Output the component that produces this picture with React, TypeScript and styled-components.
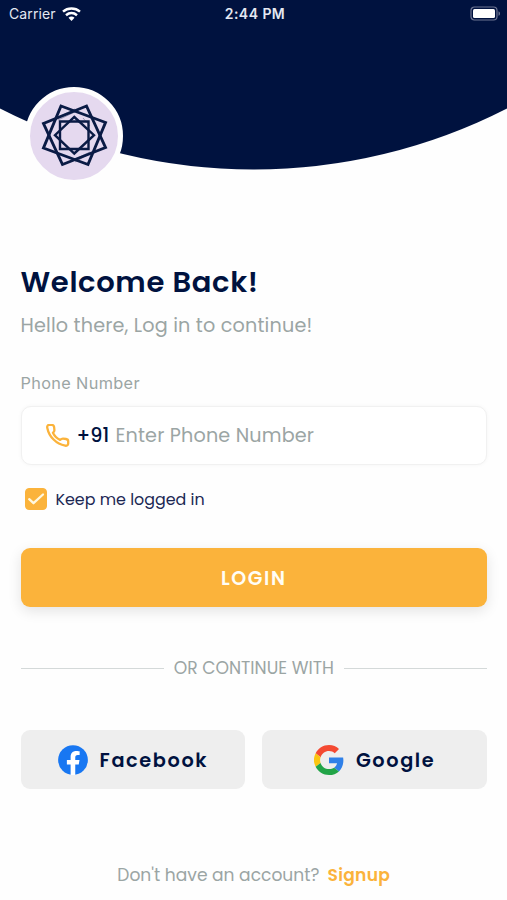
import React, { useState } from "react";
import styled, { createGlobalStyle } from "styled-components";

const navy = "#00123f";
const amber = "#fbb33b";
const gray = "#9ba5a4";

const GlobalStyle = createGlobalStyle`
  * { box-sizing: border-box; }
  body { margin: 0; background: #fefefe; }
  button, input { font: inherit; }
`;

const Screen = styled.main`
  width: 507px;
  height: 900px;
  overflow: hidden;
  display: flex;
  flex-direction: column;
  background: #fefefe;
  color: ${navy};
  font-family: Poppins, Inter, sans-serif;
  white-space: nowrap;
`;

const Header = styled.header`
  position: relative;
  flex: none;
  height: 180px;
`;

const Curve = styled.svg`
  position: absolute;
  inset: 0;
`;

const StatusBar = styled.div`
  position: relative;
  display: grid;
  grid-template-columns: 1fr auto 1fr;
  align-items: center;
  height: 28px;
  padding: 0 6px 0 9px;
  color: #e4e8f2;
  font: 400 14px/28px Inter, sans-serif;
`;

const Carrier = styled.div`
  display: flex;
  align-items: center;
  gap: 6px;
  letter-spacing: 0.1px;
`;

const Clock = styled.div`
  font-weight: 600;
  letter-spacing: 0.45px;
`;

const BatteryIcon = styled.svg`
  justify-self: end;
  margin-bottom: 2px;
`;

const Logo = styled.div`
  position: absolute;
  left: 25px;
  top: 87px;
  width: 98px;
  height: 98px;
  border: 5px solid #fefefe;
  border-radius: 50%;
  background: #e5d9ef;
`;

const Content = styled.section`
  flex: 1;
  display: flex;
  flex-direction: column;
  padding: 82px 20px 0 20.5px;
`;

const Title = styled.h1`
  margin: 0;
  font-size: 29px;
  font-weight: 600;
  line-height: 40px;
  letter-spacing: 0.65px;
`;

const Subtitle = styled.p`
  margin: 9px 0 0;
  color: ${gray};
  font-size: 19.2px;
  line-height: 30px;
  letter-spacing: 0.17px;
`;

const Label = styled.label`
  margin-top: 30px;
  color: ${gray};
  font-family: Inter, sans-serif;
  font-size: 16.3px;
  line-height: 25px;
  letter-spacing: 0.35px;
`;

const Field = styled.div`
  display: flex;
  align-items: center;
  height: 59px;
  margin-top: 10px;
  padding-left: 24px;
  border: 1px solid #f1f1f1;
  border-radius: 10px;
  background: #fff;
  box-shadow: 0 0 4px rgba(0, 0, 0, 0.04);
  font-size: 19.2px;
`;

const Prefix = styled.span`
  width: 39px;
  margin-left: 7px;
  font-weight: 500;
`;

const PhoneInput = styled.input`
  width: 300px;
  padding: 0;
  border: 0;
  outline: 0;
  background: none;
  color: ${navy};
  letter-spacing: 0.16px;

  &::placeholder { color: ${gray}; opacity: 1; }
`;

const Remember = styled.button`
  display: flex;
  align-items: center;
  align-self: flex-start;
  gap: 9px;
  height: 24px;
  margin-top: 22px;
  padding: 0 0 0 4px;
  border: 0;
  background: none;
  color: #1c2854;
  font-size: 15.9px;
`;

const CheckBox = styled.span<{ $checked: boolean }>`
  display: flex;
  width: 22px;
  height: 22px;
  border: 1px solid ${amber};
  border-radius: 4px;
  background: ${({ $checked }) => ($checked ? amber : "#fff")};
`;

const LoginButton = styled.button`
  flex: none;
  height: 59px;
  margin-top: 37px;
  padding: 2px 0 0;
  border: 0;
  border-radius: 9px;
  background: ${amber};
  box-shadow: 0 4px 14px rgba(0, 0, 0, 0.11);
  color: #fffdf5;
  font-size: 19px;
  font-weight: 600;
  letter-spacing: 1.6px;
`;

const Divider = styled.div`
  display: flex;
  align-items: center;
  gap: 10px;
  height: 24px;
  margin-top: 49px;
  color: ${gray};
  font-size: 17.2px;

  &::before, &::after {
    content: "";
    flex: 1;
    height: 1px;
    background: #d4d9d9;
  }
`;

const DividerText = styled.span`
  display: flex;
  justify-content: center;
  width: 160px;
`;

const Socials = styled.div`
  display: grid;
  grid-template-columns: 1fr 1fr;
  gap: 17px;
  margin-top: 50px;
`;

const SocialButton = styled.button`
  display: flex;
  align-items: center;
  justify-content: center;
  gap: 12px;
  height: 59px;
  padding: 0;
  border: 0;
  border-radius: 9px;
  background: #eee;
  color: ${navy};
  font-size: 19.3px;
  font-weight: 600;
  letter-spacing: 1.6px;
`;

const SocialName = styled.span`
  padding-top: 2px;
`;

const Footer = styled.footer`
  display: flex;
  justify-content: center;
  gap: 8px;
  margin-top: 74px;
  color: ${gray};
  font-size: 17.1px;
  line-height: 25px;
`;

const SignupLink = styled.a`
  color: ${amber};
  font-weight: 600;
  letter-spacing: 0.3px;
`;

const WifiIcon = () => (
  <svg width="19" height="15" viewBox="0 0 19 15" fill="none" stroke="#fff" strokeWidth="2.5">
    <path d="M1 4.6C5.8.4 13.2.4 18 4.6" />
    <path d="M4 8.2c3.3-2.8 7.7-2.8 11 0" />
    <path d="M6.5 10.7c1.8-1.5 4.2-1.5 6 0L9.5 13.9Z" fill="#fff" stroke="none" />
  </svg>
);

const Battery = () => (
  <BatteryIcon width="31" height="15" viewBox="0 0 31 15">
    <rect x="1" y="1" width="26" height="13" rx="3.5" fill="none" stroke="#6d7592" strokeWidth="1.2" />
    <rect x="3" y="3" width="22" height="9" rx="1.5" fill="#fff" />
    <path d="M28.5 5.2c2 .8 2 3.8 0 4.6Z" fill="#6d7592" />
  </BatteryIcon>
);

const StarMark = () => (
  <svg width="88" height="88" viewBox="30 92 88 88" fill="none" stroke="#0a1b45">
    <g stroke="#77799a" strokeWidth=".7">
      <path d="M58 120 79 110M60 116l15-7M73 160l17-8M75 162l14-8M83 118l7 8" />
    </g>
    <g strokeWidth="2.9">
      <path d="M61 106 105.5 122.5 88 164.5 43.5 148Z" />
      <path d="M86.5 106 105.5 147.5 62.5 164.5 43.5 123.5Z" />
    </g>
    <g strokeWidth="2.4">
      <path d="M60 121.5h28.5v27.5H60Z" />
      <path d="M74.3 117 94 135.2 74.3 153.5 55 135.2Z" />
    </g>
  </svg>
);

const PhoneIcon = () => (
  <svg width="24" height="24" viewBox="0 0 24 24" fill="none" stroke={amber} strokeWidth="2.3" strokeLinejoin="round">
    <path d="M1.3 3.9C.9 2.2 1.7.9 3.2.9H5.7C7.1.9 7.9 1.8 8.1 3L8.4 6C8.5 7.4 7.8 8 6.9 8.8C8.4 11.9 11.1 14.6 14.1 15.9C15.1 15 15.8 14.5 17.1 14.6L20 15C21.4 15.2 22.2 16 22.2 17.3V19.7C22.1 21.2 20.8 22 19.2 21.7C10.3 20 3.1 12.9 1.3 3.9Z" />
  </svg>
);

const CheckIcon = () => (
  <svg width="20" height="20" viewBox="0 0 20 20" fill="none" stroke="#fff8df" strokeWidth="2.3" strokeLinecap="round" strokeLinejoin="round">
    <path d="m3.2 10.2 4.3 4L17 5.5" />
  </svg>
);

const FacebookIcon = () => (
  <svg width="30" height="30" viewBox="0 0 24 24">
    <circle cx="12" cy="12" r="11.9" fill="#1877f2" />
    <path fill="#fff" d="M10.1 24v-8.4H7.1V12h3V9.4c0-3 1.8-4.7 4.5-4.7 1.3 0 2.7.2 2.7.2v3h-1.5c-1.5 0-2 .9-2 1.9V12h3.4l-.6 3.6h-2.8V24Z" />
  </svg>
);

const GoogleIcon = () => (
  <svg width="30" height="30" viewBox="0 0 48 48">
    <path fill="#f44a32" d="M24 9.5c3.6 0 6.7 1.2 9.2 3.6l6.8-6.8C35.9 2.4 30.5 0 24 0 14.6 0 6.5 5.4 2.6 13.2l7.9 6.2C12.4 13.7 17.7 9.5 24 9.5Z" />
    <path fill="#2f80e8" d="M47 24.6c0-1.6-.2-3.1-.4-4.6H24v9h12.9c-.6 3-2.3 5.5-4.7 7.2l7.7 6C44.4 38 47 31.8 47 24.6Z" />
    <path fill="#fbc510" d="M10.5 28.6a14.4 14.4 0 0 1 0-9.2l-7.9-6.2a24 24 0 0 0 0 21.6Z" />
    <path fill="#22a447" d="M24 48c6.5 0 11.9-2.1 15.9-5.8l-7.7-6c-2.2 1.5-4.9 2.3-8.2 2.3-6.3 0-11.6-4.2-13.5-9.9l-7.9 6.2C6.5 42.6 14.6 48 24 48Z" />
  </svg>
);

export default function App() {
  const [keep, setKeep] = useState(true);
  return (
    <Screen>
      <GlobalStyle />
      <Header>
        <Curve width="507" height="180" viewBox="0 0 507 180">
          <path d="M0 0H507V108.5A557 557 0 0 1 0 108.5Z" fill={navy} />
        </Curve>
        <StatusBar>
          <Carrier><span>Carrier</span><WifiIcon /></Carrier>
          <Clock>2:44 PM</Clock>
          <Battery />
        </StatusBar>
        <Logo><StarMark /></Logo>
      </Header>
      <Content>
        <Title>Welcome Back!</Title>
        <Subtitle>Hello there, Log in to continue!</Subtitle>
        <Label htmlFor="phone">Phone Number</Label>
        <Field>
          <PhoneIcon />
          <Prefix>+91</Prefix>
          <PhoneInput id="phone" type="tel" placeholder="Enter Phone Number" />
        </Field>
        <Remember type="button" role="checkbox" aria-checked={keep} onClick={() => setKeep(!keep)}>
          <CheckBox $checked={keep}>{keep && <CheckIcon />}</CheckBox>
          <span>Keep me logged in</span>
        </Remember>
        <LoginButton type="button">LOGIN</LoginButton>
        <Divider><DividerText>OR CONTINUE WITH</DividerText></Divider>
        <Socials>
          <SocialButton type="button"><FacebookIcon /><SocialName>Facebook</SocialName></SocialButton>
          <SocialButton type="button"><GoogleIcon /><SocialName>Google</SocialName></SocialButton>
        </Socials>
        <Footer><span>Don't have an account?</span><SignupLink>Signup</SignupLink></Footer>
      </Content>
    </Screen>
  );
}
